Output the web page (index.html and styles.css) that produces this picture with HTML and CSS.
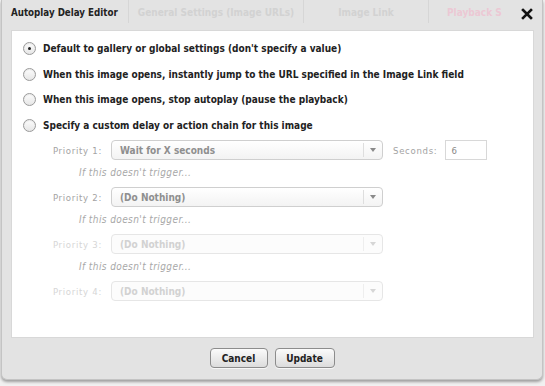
FILE: index.html
```html
<!DOCTYPE html>
<html lang="en">
<head>
  <meta charset="UTF-8" />
  <title>Autoplay Delay Editor</title>
  <link rel="stylesheet" href="styles.css">
</head>
<body>
  <div class="dialog">
    <header class="dialog-head">
      <h1 class="title">Autoplay Delay Editor</h1>
      <div class="tab tab-wide">General Settings (Image URLs)</div>
      <div class="tab">Image Link</div>
      <div class="tab tab-pink">Playback S</div>
      <svg class="close" width="12" height="12" viewBox="0 0 12 12">
        <path d="M2 2 L10 10 M10 2 L2 10" stroke="#111" stroke-width="2.6" stroke-linecap="square"/>
      </svg>
    </header>

    <div class="panel">
      <label class="option"><span class="radio checked"></span>Default to gallery or global settings (don't specify a value)</label>
      <label class="option"><span class="radio"></span>When this image opens, instantly jump to the URL specified in the Image Link field</label>
      <label class="option"><span class="radio"></span>When this image opens, stop autoplay (pause the playback)</label>
      <label class="option"><span class="radio"></span>Specify a custom delay or action chain for this image</label>

      <div class="chain">
        <div class="prio">
          <span class="prio-label">Priority 1:</span>
          <div class="select"><span>Wait for X seconds</span><i class="arrow"></i></div>
          <span class="sec-label">Seconds:</span>
          <div class="sec-input">6</div>
        </div>
        <div class="trigger">If this doesn't trigger...</div>

        <div class="prio">
          <span class="prio-label">Priority 2:</span>
          <div class="select"><span>(Do Nothing)</span><i class="arrow"></i></div>
        </div>
        <div class="trigger">If this doesn't trigger...</div>

        <div class="prio off">
          <span class="prio-label">Priority 3:</span>
          <div class="select"><span>(Do Nothing)</span><i class="arrow"></i></div>
        </div>
        <div class="trigger">If this doesn't trigger...</div>

        <div class="prio off">
          <span class="prio-label">Priority 4:</span>
          <div class="select"><span>(Do Nothing)</span><i class="arrow"></i></div>
        </div>
      </div>
    </div>

    <footer class="dialog-foot">
      <button class="btn btn-cancel">Cancel</button>
      <button class="btn btn-update">Update</button>
    </footer>
  </div>
</body>
</html>
```

FILE: styles.css
```css
* { box-sizing: border-box; margin: 0; padding: 0; }

body {
  width: 545px;
  height: 386px;
  overflow: hidden;
  background: #f1f1f1;
  font-family: "DejaVu Sans Condensed", "DejaVu Sans", sans-serif;
  color: #333;
}

.dialog {
  position: relative;
  width: 542px;
  height: 380px;
  margin-left: 1px;
  background: #e3e3e3;
  border: 1px solid #c4c4c4;
  border-top: none;
  border-radius: 0 0 6px 6px;
  box-shadow: 0 2px 3px rgba(0,0,0,0.35);
}

.dialog-head {
  height: 30px;
  display: flex;
  font-size: 10px;
  font-weight: bold;
}

.title,
.tab {
  flex-shrink: 0;
  height: 23px;
  padding-top: 7px;
  border-right: 1px solid #d6d6d6;
}

.title {
  width: 127px;
  padding-left: 9px;
  font-size: 9.7px;
  color: #222;
}

.tab {
  width: 125px;
  color: #d2d2d2;
  text-align: center;
}

.tab-wide { width: 175px; }

.tab-pink {
  border-right: none;
  color: #ecc8d4;
  width: 90px;
  text-align: left;
  padding-left: 18px;
  white-space: nowrap;
  overflow: hidden;
}

.close {
  position: absolute;
  top: 8px;
  right: 9px;
}

.panel {
  margin: 0 8px 0 9px;
  height: 308px;
  background: #fff;
  border: 1px solid #d8d8d8;
  padding-top: 5px;
}

.option {
  display: flex;
  align-items: center;
  height: 25.5px;
  padding-left: 11px;
  font-size: 10px;
  font-weight: bold;
  color: #222;
}

.radio {
  width: 13px;
  height: 13px;
  margin-right: 7px;
  border-radius: 50%;
  border: 1px solid #9a9a9a;
  background: linear-gradient(#fdfdfd, #e6e6e6);
  box-shadow: inset 0 1px 1px rgba(0,0,0,0.08);
  display: flex;
  align-items: center;
  justify-content: center;
}

.radio.checked::after {
  content: "";
  width: 3px;
  height: 3px;
  border-radius: 50%;
  background: #222;
}

.prio {
  display: flex;
  align-items: center;
  height: 24px;
  font-size: 9.5px;
  color: #a3a3a3;
}

.prio-label {
  width: 90px;
  text-align: right;
  letter-spacing: 0.7px;
  margin-right: 9px;
}

.select {
  width: 272px;
  height: 20px;
  display: flex;
  align-items: center;
  border: 1px solid #cfcfcf;
  border-radius: 4px;
  background: linear-gradient(#ffffff, #f3f3f3);
  font-size: 10px;
  font-weight: bold;
  color: #8f8f8f;
  padding-left: 8px;
}

.select span { flex: 1; }

.arrow {
  width: 19px;
  height: 14px;
  border-left: 1px solid #dedede;
  display: flex;
  align-items: center;
  justify-content: center;
}

.arrow::after {
  content: "";
  border-left: 3px solid transparent;
  border-right: 3px solid transparent;
  border-top: 4px solid #8a8a8a;
}

.sec-label {
  margin-left: 10px;
  letter-spacing: 0.7px;
}

.sec-input {
  width: 42px;
  height: 20px;
  margin-left: 8px;
  border: 1px solid #d8d8d8;
  padding: 4px 5px;
  color: #888;
  font-size: 9.5px;
}

.trigger {
  height: 23px;
  line-height: 22px;
  padding-left: 67px;
  font-size: 10px;
  font-style: italic;
  letter-spacing: 0.4px;
  color: #a8a8a8;
}

.prio.off { color: #d6d6d6; }
.prio.off .select { color: #d2d2d2; border-color: #e6e6e6; background: #fcfcfc; }
.prio.off .arrow { border-color: #eeeeee; }
.prio.off .arrow::after { border-top-color: #d6d6d6; }

.dialog-foot {
  display: flex;
  justify-content: center;
  gap: 7px;
  padding-top: 10px;
}

.btn {
  height: 20px;
  padding: 0;
  font-family: inherit;
  font-size: 10px;
  font-weight: bold;
  color: #222;
  border: 1px solid #8c8c8c;
  border-radius: 4px;
  background: linear-gradient(#fbfbfb, #dcdcdc);
  box-shadow: 0 1px 0 rgba(255,255,255,0.7);
}

.btn-cancel { width: 58px; }
.btn-update { width: 60px; }
```
